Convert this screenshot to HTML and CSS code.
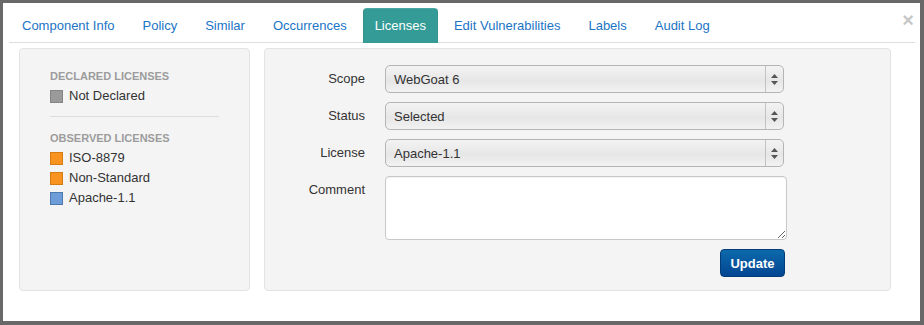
FILE: index.html
```html
<!DOCTYPE html>
<html>
<head>
<meta charset="utf-8">
<link rel="stylesheet" href="styles.css">
</head>
<body>
<div class="modal">
  <button class="close" type="button">&times;</button>
  <ul class="tabs">
    <li><a>Component Info</a></li>
    <li><a>Policy</a></li>
    <li><a>Similar</a></li>
    <li><a>Occurrences</a></li>
    <li class="active"><a>Licenses</a></li>
    <li><a>Edit Vulnerabilities</a></li>
    <li><a>Labels</a></li>
    <li><a>Audit Log</a></li>
  </ul>
  <div class="content">
    <div class="well legend">
      <div class="heading">Declared Licenses</div>
      <div class="item"><span class="sw sw-gray"></span>Not Declared</div>
      <hr>
      <div class="heading">Observed Licenses</div>
      <div class="item"><span class="sw sw-orange"></span>ISO-8879</div>
      <div class="item"><span class="sw sw-orange"></span>Non-Standard</div>
      <div class="item"><span class="sw sw-blue"></span>Apache-1.1</div>
    </div>
    <div class="well form">
      <label class="lbl">Scope</label>
      <div class="select"><span class="value">WebGoat 6</span><span class="arrows"><svg width="7" height="11" viewBox="0 0 7 11"><polygon points="0,4 3.5,0 7,4" fill="#555"/><polygon points="0,7 3.5,11 7,7" fill="#555"/></svg></span></div>
      <label class="lbl">Status</label>
      <div class="select"><span class="value">Selected</span><span class="arrows"><svg width="7" height="11" viewBox="0 0 7 11"><polygon points="0,4 3.5,0 7,4" fill="#555"/><polygon points="0,7 3.5,11 7,7" fill="#555"/></svg></span></div>
      <label class="lbl">License</label>
      <div class="select"><span class="value">Apache-1.1</span><span class="arrows"><svg width="7" height="11" viewBox="0 0 7 11"><polygon points="0,4 3.5,0 7,4" fill="#555"/><polygon points="0,7 3.5,11 7,7" fill="#555"/></svg></span></div>
      <label class="lbl">Comment</label>
      <textarea class="comment"></textarea>
      <button class="btn-update" type="button">Update</button>
    </div>
  </div>
</div>
</body>
</html>
```
FILE: styles.css
```css
html, body {
  margin: 0;
  height: 100%;
}
body {
  background: #686868;
  font-family: "Liberation Sans", Arial, Helvetica, sans-serif;
  font-size: 13px;
  color: #333;
  overflow: hidden;
}
.modal {
  position: relative;
  box-sizing: border-box;
  margin: 3px 4px 0 3px;
  height: 318px;
  background: #fff;
  padding-top: 5px;
}
.close {
  position: absolute;
  top: 7px;
  right: 6px;
  padding: 0;
  border: 0;
  background: none;
  font-family: "Liberation Sans", Arial, sans-serif;
  font-size: 20px;
  font-weight: bold;
  line-height: 20px;
  color: #000;
  opacity: 0.22;
}
.tabs {
  list-style: none;
  margin: 0 5px 0 6px;
  padding: 0 0 0 1px;
  display: flex;
  border-bottom: 1px solid #ddd;
}
.tabs li {
  margin-bottom: -1px;
  margin-right: 4px;
}
.tabs a {
  display: block;
  padding: 7px 11px 8px;
  line-height: 19px;
  border: 1px solid transparent;
  border-bottom: 0;
  border-radius: 4px 4px 0 0;
  color: #1b74c5;
  cursor: pointer;
}
.tabs li.active a {
  background: #349b97;
  border-color: #4aa8a4 #34928e transparent;
  color: #fff;
}
.content {
  display: flex;
  gap: 14px;
  margin: 5px 29px 0 16px;
}
.well {
  box-sizing: border-box;
  background: #f4f4f4;
  border: 1px solid #e3e3e3;
  border-radius: 4px;
}
.legend {
  width: 231px;
  flex: none;
  padding: 17px 30px 0 30px;
}
.heading {
  font-size: 11px;
  font-weight: bold;
  line-height: 20px;
  color: #9c9c9c;
  text-transform: uppercase;
}
.item {
  display: flex;
  align-items: center;
  line-height: 20px;
}
.sw {
  width: 13px;
  height: 13px;
  box-sizing: border-box;
  border: 1px solid;
  margin-right: 6px;
  flex: none;
}
.sw-gray { background: #9a9a9a; border-color: #858585; }
.sw-orange { background: #f7931e; border-color: #d47d14; }
.sw-blue { background: #6d9dd8; border-color: #4d79ad; }
.legend hr {
  margin: 10px 0 11px;
  border: 0;
  border-top: 1px solid #dcdcdc;
  height: 0;
}
.form {
  flex: 1;
  display: grid;
  grid-template-columns: 80px 402px;
  column-gap: 20px;
  row-gap: 9px;
  align-content: start;
  padding: 16px 19px 13px 20px;
}
.lbl {
  text-align: right;
  line-height: 28px;
  color: #333;
}
.select {
  width: 399px;
  height: 28px;
  box-sizing: border-box;
  border: 1px solid #b5b5b5;
  border-radius: 5px;
  background: linear-gradient(to bottom, #f3f3f3 0%, #e9e9e9 45%, #e6e6e6 55%, #f2f2f2 100%);
  display: flex;
  align-items: center;
}
.select .value {
  flex: 1;
  padding-left: 8px;
  color: #333;
}
.select .arrows {
  width: 17px;
  height: 100%;
  border-left: 1px solid #c2c2c2;
  display: flex;
  align-items: center;
  justify-content: center;
}
.comment {
  width: 402px;
  height: 64px;
  box-sizing: border-box;
  margin: 0;
  border: 1px solid #c8c8c8;
  border-radius: 4px;
  background: #fff;
  box-shadow: inset 0 1px 1px rgba(0,0,0,0.06);
  font-family: inherit;
  font-size: 13px;
}
.btn-update {
  grid-column: 2;
  justify-self: end;
  margin-right: 2px;
  width: 65px;
  height: 28px;
  box-sizing: border-box;
  border: 1px solid #033c78;
  border-radius: 4px;
  background: linear-gradient(to bottom, #0c6aab 0%, #034592 100%);
  color: #fff;
  font-family: inherit;
  font-size: 13px;
  font-weight: bold;
  padding: 0;
}
```
